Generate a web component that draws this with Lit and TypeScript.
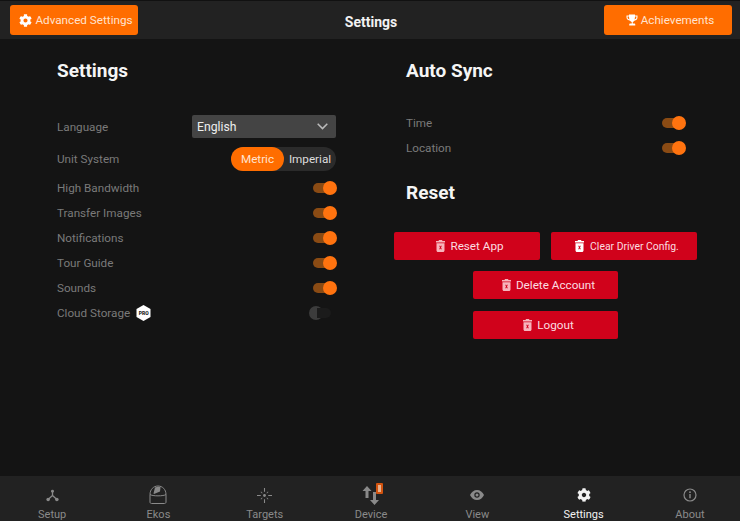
import { LitElement, css, html, svg } from 'lit';
import { customElement } from 'lit/decorators.js';

const gear = svg`<path d="M487.4 315.7l-42.6-24.6c4.3-23.2 4.3-47 0-70.2l42.6-24.6c4.9-2.8 7.1-8.6 5.5-14-11.1-35.6-30-67.8-54.7-94.6-3.8-4.1-10-5.1-14.8-2.3L380.8 110c-17.9-15.4-38.5-27.3-60.8-35.1V25.8c0-5.6-3.9-10.5-9.4-11.7-36.7-8.2-74.3-7.8-109.2 0-5.5 1.2-9.4 6.1-9.4 11.7V75c-22.2 7.9-42.8 19.8-60.8 35.1L88.7 85.5c-4.9-2.8-11-1.9-14.8 2.3-24.7 26.7-43.6 58.9-54.7 94.6-1.7 5.4.6 11.2 5.5 14L67.3 221c-4.3 23.2-4.3 47 0 70.2l-42.6 24.6c-4.9 2.8-7.1 8.6-5.5 14 11.1 35.6 30 67.8 54.7 94.6 3.8 4.1 10 5.1 14.8 2.3l42.6-24.6c17.9 15.4 38.5 27.3 60.8 35.1v49.2c0 5.6 3.9 10.5 9.4 11.7 36.7 8.2 74.3 7.8 109.2 0 5.5-1.2 9.4-6.1 9.4-11.7v-49.2c22.2-7.9 42.8-19.8 60.8-35.1l42.6 24.6c4.9 2.8 11 1.9 14.8-2.3 24.7-26.7 43.6-58.9 54.7-94.6 1.5-5.5-.7-11.3-5.6-14.1zM256 336c-44.1 0-80-35.9-80-80s35.9-80 80-80 80 35.9 80 80-35.9 80-80 80z"/>`;

const gearIcon = (size: number) =>
  html`<svg width=${size} height=${size} viewBox="0 0 512 512" fill="currentColor">${gear}</svg>`;

const trophyIcon = html`<svg width="12" height="12" viewBox="0 0 24 24" fill="currentColor">
  <path d="M6 1h12v2h5v4c0 3.500-2.700 6-6.200 6.300-.8 1.300-1.900 2.200-3.300 2.600V19h3c1 0 2 .8 2 2v2H6.500v-2c0-1.200 1-2 2-2h3v-3.100c-1.400-.4-2.500-1.300-3.300-2.600C4.700 13 1 10.500 1 7V3h5V1zM3.200 5.200V7c0 1.800 1.500 3.300 3.700 3.800C6.300 9.300 6.100 7.300 6 5.200H3.200zm14.800 0c-.1 2.100-.3 4.100-.9 5.600 2.200-.5 3.700-2 3.700-3.800V5.200H18z"/>
</svg>`;

const trashIcon = html`<svg class="trash" width="9" height="12" viewBox="0 0 18 24" fill="currentColor">
  <path fill-rule="evenodd" d="M6 0h6l1 2h5v3H0V2h5l1-2zM1 6.500h16V21c0 1.700-1.300 3-3 3H4c-1.700 0-3-1.300-3-3V6.500zm5.300 5.200L8 15l-1.700 3.300h2L9 16.600l.7 1.700h2L10 15l1.700-3.300h-2L9 13.400l-.7-1.700h-2z"/>
</svg>`;

const tabIcons: Record<string, unknown> = {
  Setup: html`<svg width="13" height="13" viewBox="0 0 14 14" fill="currentColor" stroke="currentColor">
    <path d="M7 3v4L2.500 11M7 7l4.500 4" fill="none" stroke-width="1.400"/>
    <circle cx="7" cy="2.500" r="1.600" stroke="none"/><circle cx="2.300" cy="11.300" r="1.900" stroke="none"/><circle cx="11.700" cy="11.300" r="1.900" stroke="none"/>
  </svg>`,
  Ekos: html`<svg width="18" height="20" viewBox="0 0 18 20" fill="none" stroke="currentColor" stroke-width="1">
    <path d="M1 9.500C1 4.500 4.500 1 9 1s8 3.500 8 8.500V17c0 1-.7 1.500-1.500 1.500h-13C1.700 18.500 1 18 1 17V9.500z"/>
    <path d="M1 9.500c2 1.800 14 1.800 16 0"/>
    <path d="M4.500 8.500L6 2.600C8 1.800 10 1.600 11.500 2.200L11 6.500 5 9z" fill="currentColor" stroke="none"/>
  </svg>`,
  Targets: html`<svg width="15" height="15" viewBox="0 0 14 14" fill="currentColor">
    <path d="M6.500 0h1v3.500h-1zM6.500 10.500h1V14h-1zM0 6.500h3.500v1H0zM10.500 6.500H14v1h-3.500z"/>
    <circle cx="7" cy="7" r="1.300"/>
    <path d="M3.800 3.300l1.400 1.400-.5.500-1.400-1.400zM10.200 3.300l.5.500-1.400 1.400-.5-.5zM3.800 10.700l-.5-.5 1.400-1.400.5.500zM10.200 10.700l-1.400-1.400.5-.5 1.400 1.400z"/>
  </svg>`,
  Device: html`<svg width="18" height="19" viewBox="0 0 18 19" fill="currentColor">
    <path d="M5 0l4.500 5H6.500v7h-3V5H.5zM12.500 19L8 14h3V6h3v8h3z"/>
  </svg>`,
  View: html`<svg width="14" height="10" viewBox="0 0 14 10">
    <path d="M7 0c3 0 5.600 2 7 5-1.400 3-4 5-7 5S1.400 8 0 5c1.400-3 4-5 7-5z" fill="currentColor"/>
    <circle cx="7" cy="5" r="2.700" fill="#222"/><circle cx="7" cy="5" r="1.500" fill="currentColor"/>
  </svg>`,
  Settings: gearIcon(14),
  About: html`<svg width="14" height="14" viewBox="0 0 14 14" fill="currentColor">
    <circle cx="7" cy="7" r="6" fill="none" stroke="currentColor" stroke-width="1.200"/>
    <path d="M6.300 6h1.400v4.300H6.300z"/><circle cx="7" cy="4.200" r=".9"/>
  </svg>`,
};

const settingRows = ['High Bandwidth', 'Transfer Images', 'Notifications', 'Tour Guide', 'Sounds'];
const tabs = ['Setup', 'Ekos', 'Targets', 'Device', 'View', 'Settings', 'About'];

@customElement('app-root')
export class AppRoot extends LitElement {
  static styles = css`
    :host {
      display: flex;
      flex-direction: column;
      height: 521px;
      width: 740px;
      overflow: hidden;
      background: #141414;
      font-family: Roboto, sans-serif;
      font-size: 11.7px;
      color: #7a7a7a;
    }

    header {
      box-sizing: border-box;
      height: 39px;
      padding: 5px 8px 0 10px;
      border-top: 1px solid #111;
      background: #222;
      display: flex;
      justify-content: space-between;
      align-items: flex-start;
    }

    header h1 {
      margin: 8px 0 0;
      font-size: 14px;
      line-height: 16px;
      font-weight: 700;
      color: #f2f2f2;
    }

    .top-btn {
      box-sizing: border-box;
      width: 128px;
      height: 30px;
      margin-top: -1px;
      padding-left: 4px;
      border-radius: 3px;
      background: #ff6d00;
      color: #ffe3cf;
      display: flex;
      align-items: center;
      justify-content: center;
      gap: 3px;
    }

    .top-btn svg {
      color: #fff;
    }

    main {
      flex: 1;
      display: grid;
      grid-template-columns: 279px 280px;
      column-gap: 70px;
      padding: 20px 0 0 57px;
    }

    h2 {
      margin: 0;
      font-size: 19px;
      line-height: 24px;
      font-weight: 700;
      color: #f5f5f5;
    }

    .row {
      height: 25px;
      display: flex;
      align-items: center;
      justify-content: space-between;
    }

    .label {
      display: flex;
      align-items: center;
      gap: 6px;
    }

    .select {
      box-sizing: border-box;
      width: 144px;
      height: 23px;
      padding: 0 8px 0 5px;
      border-radius: 2px;
      background: #444;
      color: #eee;
      font-size: 12.2px;
      display: flex;
      align-items: center;
      justify-content: space-between;
    }

    .lang {
      height: 23px;
      margin-top: 32px;
    }

    .unit {
      height: 24px;
      margin: 9px 0 4px;
    }

    .segment {
      width: 105px;
      height: 24px;
      border-radius: 12px;
      background: #2b2b2b;
      color: #ddd;
      display: flex;
      align-items: center;
    }

    .segment .on {
      width: 53px;
      height: 24px;
      border-radius: 12px;
      background: #ff6d00;
      color: #ffe3cf;
      display: flex;
      align-items: center;
      justify-content: center;
    }

    .segment .off {
      flex: 1;
      text-align: center;
    }

    .toggle {
      width: 24px;
      height: 14px;
      margin-right: -1px;
      display: flex;
      align-items: center;
    }

    .toggle .track {
      width: 16px;
      height: 10px;
      border-radius: 5px 0 0 5px;
      background: #8a4b14;
    }

    .toggle .thumb {
      width: 14px;
      height: 14px;
      margin-left: -6px;
      border-radius: 50%;
      background: #ff730f;
    }

    .toggle.off {
      width: 22px;
      margin-right: 5px;
    }

    .toggle.off .thumb {
      order: -1;
      margin: 0 -6px 0 0;
      background: #3c3c3c;
    }

    .toggle.off .track {
      width: 14px;
      border-radius: 0 5px 5px 0;
      background: #1b1b1b;
    }

    .pro {
      display: inline-grid;
      place-items: center;
      width: 15px;
      height: 16px;
    }

    .pro > * {
      grid-area: 1 / 1;
    }

    .pro span {
      font-size: 5px;
      font-weight: 900;
      color: #222;
    }

    .sync {
      margin-top: 27px;
    }

    .sync .toggle {
      margin-right: 0;
    }

    .reset {
      margin-top: 21px;
    }

    .actions {
      width: 303px;
      margin: 27px 0 0 -12px;
      display: flex;
      flex-direction: column;
      align-items: center;
      gap: 11px;
    }

    .pair {
      display: flex;
      gap: 11px;
    }

    .danger {
      box-sizing: border-box;
      width: 146px;
      height: 28px;
      padding-left: 6px;
      border-radius: 2px;
      background: #d0021b;
      color: #fbdde0;
      display: flex;
      align-items: center;
      justify-content: center;
      gap: 5px;
    }

    .danger .trash {
      color: #f7b4bc;
    }

    .danger.small {
      font-size: 10.4px;
      gap: 6px;
    }

    .danger.small .trash {
      color: #fff;
    }

    .danger.narrow {
      width: 145px;
    }

    .danger.last {
      margin-top: 1px;
    }

    footer {
      height: 45px;
      margin-left: -1px;
      background: #222;
      display: grid;
      grid-template-columns: repeat(7, 106.3px);
    }

    .tab {
      display: flex;
      flex-direction: column;
      align-items: center;
      font-size: 11px;
      line-height: 13px;
      padding-top: 6px;
      color: #8a8a8a;
    }

    .tab.active {
      color: #f2f2f2;
    }

    .tab .icon {
      height: 26px;
      display: flex;
      align-items: center;
      position: relative;
    }

    .badge {
      box-sizing: border-box;
      position: absolute;
      right: -3px;
      top: 1px;
      width: 7px;
      height: 11px;
      border-radius: 1px;
      border: 2px solid #d2530f;
      background: #e8b08c;
    }
  `;

  private toggle(on = true) {
    return html`<div class="toggle ${on ? '' : 'off'}"><div class="track"></div><div class="thumb"></div></div>`;
  }

  render() {
    return html`
      <header>
        <div class="top-btn">${gearIcon(13)}<span>Advanced Settings</span></div>
        <h1>Settings</h1>
        <div class="top-btn">${trophyIcon}<span>Achievements</span></div>
      </header>
      <main>
        <section>
          <h2>Settings</h2>
          <div class="row lang">
            <span class="label">Language</span>
            <div class="select">
              <span>English</span>
              <svg width="11" height="7" viewBox="0 0 11 7" fill="none" stroke="#bbb" stroke-width="1.500"><path d="M.7 .8l4.800 4.800L10.300 .8"/></svg>
            </div>
          </div>
          <div class="row unit">
            <span class="label">Unit System</span>
            <div class="segment"><span class="on">Metric</span><span class="off">Imperial</span></div>
          </div>
          ${settingRows.map(
            (name) => html`<div class="row"><span class="label">${name}</span>${this.toggle()}</div>`
          )}
          <div class="row">
            <span class="label">Cloud Storage
              <span class="pro">
                <svg width="15" height="16" viewBox="0 0 15 16" fill="#fff"><path d="M7.500 0l7 4v8l-7 4-7-4V4z"/></svg>
                <span>PRO</span>
              </span>
            </span>
            ${this.toggle(false)}
          </div>
        </section>
        <section>
          <h2>Auto Sync</h2>
          <div class="sync">
            <div class="row"><span class="label">Time</span>${this.toggle()}</div>
            <div class="row"><span class="label">Location</span>${this.toggle()}</div>
          </div>
          <h2 class="reset">Reset</h2>
          <div class="actions">
            <div class="pair">
              <div class="danger">${trashIcon}<span>Reset App</span></div>
              <div class="danger small">${trashIcon}<span>Clear Driver Config.</span></div>
            </div>
            <div class="danger narrow">${trashIcon}<span>Delete Account</span></div>
            <div class="danger narrow last">${trashIcon}<span>Logout</span></div>
          </div>
        </section>
      </main>
      <footer>
        ${tabs.map(
          (name) => html`<div class="tab ${name === 'Settings' ? 'active' : ''}">
            <div class="icon">
              ${tabIcons[name]}
              ${name === 'Device' ? html`<div class="badge"></div>` : ''}
            </div>
            <span>${name}</span>
          </div>`
        )}
      </footer>
    `;
  }
}
